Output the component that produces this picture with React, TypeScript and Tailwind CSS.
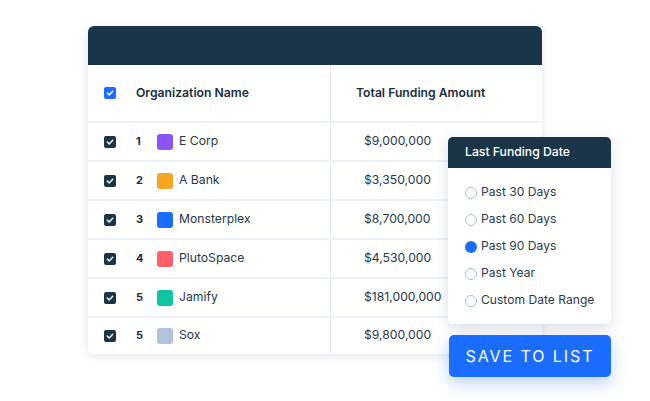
import React from "react";

const rows = [
  { n: 1, name: "E Corp", color: "bg-[#8b55f7]", amt: "$9,000,000" },
  { n: 2, name: "A Bank", color: "bg-[#f6a623]", amt: "$3,350,000" },
  { n: 3, name: "Monsterplex", color: "bg-[#1a6dff]", amt: "$8,700,000" },
  { n: 4, name: "PlutoSpace", color: "bg-[#ff5f67]", amt: "$4,530,000" },
  { n: 5, name: "Jamify", color: "bg-[#0fc4a2]", amt: "$181,000,000" },
  { n: 5, name: "Sox", color: "bg-[#b2c2da]", amt: "$9,800,000" },
];

const options = ["Past 30 Days", "Past 60 Days", "Past 90 Days", "Past Year", "Custom Date Range"];

function Check({ blue }: { blue?: boolean }) {
  return (
    <div
      className={`w-3 h-3 rounded-[2px] flex items-center justify-center ${blue ? "bg-[#1a6dff]" : "bg-[#1b3548]"}`}
    >
      <svg width="8" height="8" viewBox="0 0 8 8" fill="none">
        <path d="M1.3 4.1 L3.2 5.9 L6.7 2.2" stroke="white" strokeWidth="1.4" strokeLinecap="round" strokeLinejoin="round" />
      </svg>
    </div>
  );
}

export default function App() {
  return (
    <div
      className="relative w-[650px] h-[401px] bg-white overflow-hidden"
      style={{ fontFamily: "Inter, 'Noto Sans', sans-serif" }}
    >
      <div className="pt-[26px] pl-[88px]">
        <div className="w-[454px] rounded-[6px] bg-white shadow-[0_2px_10px_rgba(30,50,80,0.12)] overflow-hidden">
          <div className="h-[39px] bg-[#1b3548]" />
          <div className="grid grid-cols-[243px_211px] h-[58px] border-b-2 border-[#eef2f8]">
            <div className="flex items-center pl-4 border-r border-[#e3e8f0]">
              <Check blue />
              <span className="ml-5 text-[12.2px] font-semibold text-[#1b2d3f]">Organization Name</span>
            </div>
            <div className="flex items-center pl-[25px]">
              <span className="text-[12.2px] font-semibold text-[#1b2d3f]">Total Funding Amount</span>
            </div>
          </div>
          {rows.map((r, i) => (
            <div
              key={i}
              className={`grid grid-cols-[243px_211px] ${i < rows.length - 1 ? "h-[39px] border-b-2 border-[#eef2f8]" : "h-[36px] pb-[1px]"}`}
            >
              <div className="flex items-center pl-4 border-r border-[#e3e8f0]">
                <Check />
                <span className="ml-5 w-[21px] text-[11px] font-bold text-[#1b2d3f]">{r.n}</span>
                <div className={`w-4 h-4 rounded-[3px] ${r.color}`} />
                <span className="ml-[6px] text-[12.2px] text-[#25374a]">{r.name}</span>
              </div>
              <div className="flex items-center pl-[33px]">
                <span className="text-[12.2px] text-[#25374a]">{r.amt}</span>
              </div>
            </div>
          ))}
        </div>
      </div>

      <div className="absolute left-[448px] top-[137px] w-[163px] rounded-[5px] bg-white shadow-[0_4px_14px_rgba(30,50,80,0.16)] overflow-hidden">
        <div className="h-[31px] bg-[#1b3548] flex items-center pl-[17px]">
          <span className="text-[12.2px] font-medium text-white">Last Funding Date</span>
        </div>
        <div className="pt-[11px] pb-[10px] flex flex-col">
          {options.map((o, i) => (
            <div key={o} className="h-[27px] flex items-center pl-[17px]">
              {i === 2 ? (
                <div className="w-3 h-3 rounded-full bg-[#1a6dff]" />
              ) : (
                <div className="w-3 h-3 rounded-full border border-[#aebfd6]" />
              )}
              <span className="ml-[4px] text-[12.1px] text-[#2a3b4d]">{o}</span>
            </div>
          ))}
        </div>
      </div>

      <div className="absolute left-[449px] top-[335px] w-[162px] h-[42px] rounded-[5px] bg-[#1a6dff] shadow-[0_6px_16px_rgba(26,109,255,0.3)] flex items-center justify-center">
        <span className="text-[16px] font-normal text-white tracking-[0.12em]">SAVE TO LIST</span>
      </div>
    </div>
  );
}
